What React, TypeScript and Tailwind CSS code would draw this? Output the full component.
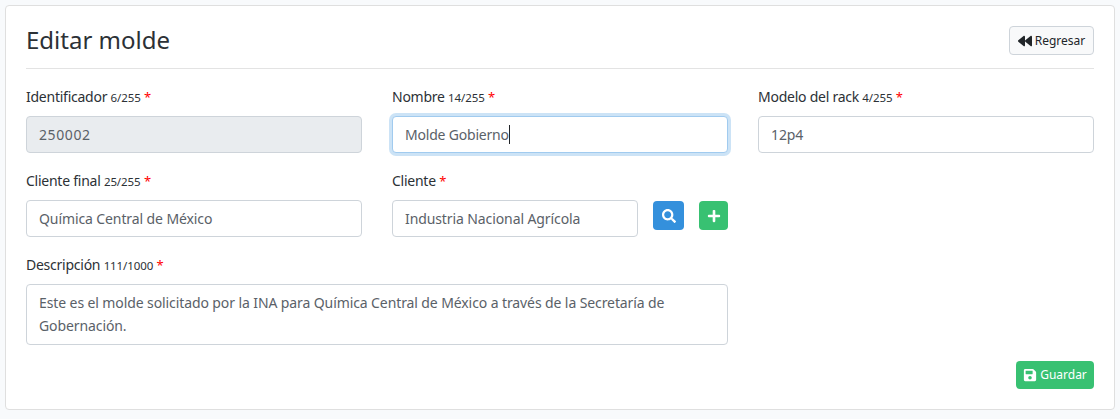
import React from 'react';
import { FaBackward, FaPlus, FaSave, FaSearch } from 'react-icons/fa';

const Label = ({ text, count }: { text: string; count?: string }) => (
  <label className="mb-2 block h-[23px] text-[14px] leading-[23px] tracking-[-0.25px] text-[#2c3136]">
    {text} {count && <small className="text-[11.5px] tracking-[-0.1px]">{count}</small>} <span className="text-[13px] text-[#ff0000]">*</span>
  </label>
);

const inputBase =
  'block h-[37px] rounded border border-[#ced4da] px-3 text-[14px] tracking-[-0.1px] text-[#5a6168] outline-none';

const App: React.FC = () => (
  <div className="min-h-[419px] bg-[#f8fafc] p-[5px] font-['Noto_Sans',sans-serif]">
    <div className="rounded border border-[#dfdfdf] bg-white p-5">
      <div className="flex items-start justify-between border-b border-[#e3e3e3] pb-[13px]">
        <h3 className="text-[24px] leading-[28px] text-[#2c3136]">Editar molde</h3>
        <button className="flex h-[29px] w-[85px] items-center justify-center gap-[3px] rounded border border-[#ced4da] bg-[#f8f9fa] text-[12px] text-[#212529]">
          <FaBackward className="text-[14px]" />
          Regresar
        </button>
      </div>
      <div className="mt-4 grid grid-cols-3 gap-x-[30px] gap-y-4">
        <div>
          <Label text="Identificador" count="6/255" />
          <input className={`${inputBase} w-full bg-[#e9ecef] tracking-[0.6px]`} value="250002" disabled readOnly />
        </div>
        <div>
          <Label text="Nombre" count="14/255" />
          <div className="flex h-[37px] items-center rounded border border-[#a1cbef] bg-white px-3 text-[14px] tracking-[-0.2px] text-[#5a6168] shadow-[0_0_0_3px_rgba(52,144,220,0.25)]">
            Molde Gobierno
            <span className="h-[19px] w-px bg-[#212529]" />
          </div>
        </div>
        <div>
          <Label text="Modelo del rack" count="4/255" />
          <input className={`${inputBase} w-full bg-white`} value="12p4" readOnly />
        </div>
        <div>
          <Label text="Cliente final" count="25/255" />
          <input className={`${inputBase} w-full bg-white`} value="Química Central de México" readOnly />
        </div>
        <div>
          <Label text="Cliente" />
          <div className="flex items-start">
            <input className={`${inputBase} w-[246px] bg-white`} value="Industria Nacional Agrícola" readOnly />
            <button className="mt-px ml-[15px] flex h-[29px] w-[31px] items-center justify-center rounded bg-[#3490dc] text-[14px] text-white">
              <FaSearch />
            </button>
            <button className="mt-px ml-[15px] flex h-[29px] w-[29px] items-center justify-center rounded bg-[#38c172] text-[14px] text-white">
              <FaPlus />
            </button>
          </div>
        </div>
        <div />
        <div className="col-span-2">
          <Label text="Descripción" count="111/1000" />
          <div className="h-[61px] rounded border border-[#ced4da] px-3 py-[6px] text-[14px] leading-[23px] tracking-[-0.1px] text-[#5a6168]">
            Este es el molde solicitado por la INA para Química Central de México a través de la Secretaría de Gobernación.
          </div>
        </div>
      </div>
      <div className="mt-4 flex justify-end">
        <button className="flex h-[28px] w-[78px] items-center justify-center gap-[3px] rounded bg-[#38c172] text-[12px] text-white">
          <FaSave className="text-[14px]" />
          Guardar
        </button>
      </div>
    </div>
  </div>
);

export default App;
